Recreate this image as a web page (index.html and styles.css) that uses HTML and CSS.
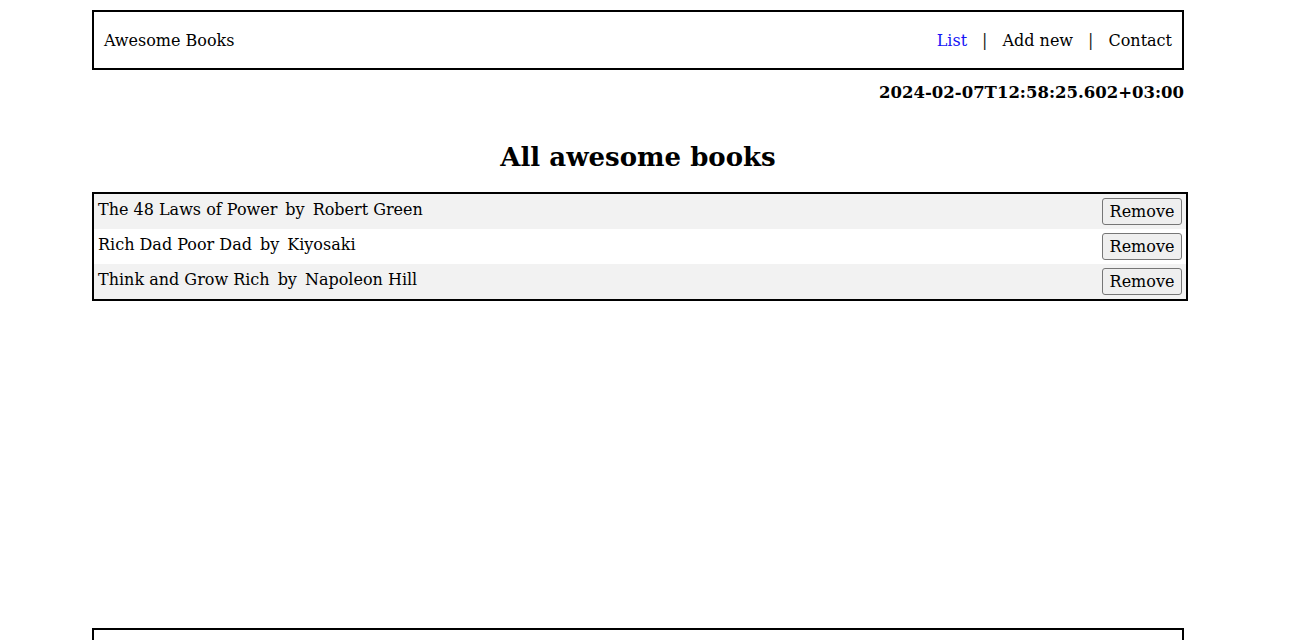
FILE: index.html
```html
<!DOCTYPE html>
<html lang="en">
<head>
<meta charset="utf-8">
<title>Awesome Books</title>
<link rel="stylesheet" href="styles.css">
</head>
<body>
<div class="page">
  <header class="topbar">
    <span class="brand">Awesome Books</span>
    <nav class="nav">
      <a class="nav-link active" href="#list">List</a>
      <span class="sep">|</span>
      <a class="nav-link" href="#add">Add new</a>
      <span class="sep">|</span>
      <a class="nav-link" href="#contact">Contact</a>
    </nav>
  </header>
  <main class="main">
    <p class="date">2024-02-07T12:58:25.602+03:00</p>
    <h1 class="title">All awesome books</h1>
    <ul class="books">
      <li class="book">
        <div class="book-info"><span>The 48 Laws of Power</span><span>by</span><span>Robert Green</span></div>
        <button class="remove" type="button">Remove</button>
      </li>
      <li class="book">
        <div class="book-info"><span>Rich Dad Poor Dad</span><span>by</span><span>Kiyosaki</span></div>
        <button class="remove" type="button">Remove</button>
      </li>
      <li class="book">
        <div class="book-info"><span>Think and Grow Rich</span><span>by</span><span>Napoleon Hill</span></div>
        <button class="remove" type="button">Remove</button>
      </li>
    </ul>
  </main>
  <footer class="footer"></footer>
</div>
</body>
</html>
```
FILE: styles.css
```css
html {
  overflow: hidden;
}

body {
  margin: 0;
  width: 1276px;
  font-family: "DejaVu Serif", "Liberation Serif", serif;
  font-size: 16px;
  color: #000;
  background: #fff;
}

.page {
  width: 1092px;
  margin: 0 auto;
  padding-top: 10px;
}

.topbar {
  box-sizing: border-box;
  height: 60px;
  border: 2px solid #000;
  padding: 0 10px;
  display: flex;
  align-items: center;
  justify-content: space-between;
}

.nav {
  display: flex;
  align-items: center;
  gap: 15px;
}

.nav-link {
  color: #000;
  text-decoration: none;
}

.nav-link.active {
  color: #1515f5;
}

.sep {
  color: #222;
}

.main {
  box-sizing: border-box;
  min-height: 558px;
  padding-top: 12px;
}

.date {
  margin: 0;
  line-height: 22px;
  text-align: right;
  font-weight: bold;
  font-size: 16.5px;
}

.title {
  margin: 35px 0 17px;
  font-size: 26px;
  line-height: 36px;
  text-align: center;
}

.books {
  list-style: none;
  width: 100%;
  margin: 0;
  padding: 0;
  border: 2px solid #000;
}

.book {
  display: flex;
  justify-content: space-between;
  align-items: flex-start;
  padding: 4px;
  height: 27px;
}

.book:nth-child(odd) {
  background: #f2f2f2;
}

.book-info {
  display: flex;
  gap: 8px;
  line-height: 22px;
  margin-top: 1px;
}

.remove {
  box-sizing: border-box;
  height: 27px;
  width: 80px;
  padding: 0 6px;
  font-family: inherit;
  font-size: 16px;
  color: #000;
  background: #efefef;
  border: 1px solid #767676;
  border-radius: 3px;
}

.footer {
  box-sizing: border-box;
  height: 60px;
  border: 2px solid #000;
}
```
